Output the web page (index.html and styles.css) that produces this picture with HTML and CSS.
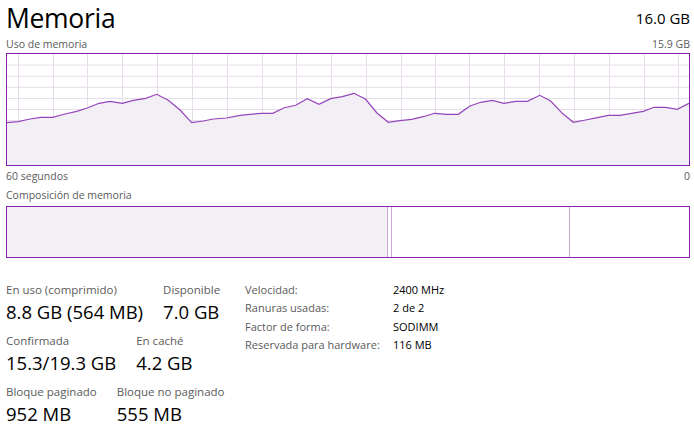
FILE: index.html
```html
<!DOCTYPE html>
<html lang="es">
<head>
<meta charset="utf-8">
<title>Memoria</title>
<link rel="stylesheet" href="styles.css">
</head>
<body>
<div class="page">
  <div class="header">
    <h1 class="title">Memoria</h1>
    <div class="total">16.0 GB</div>
  </div>
  <div class="caption-row">
    <span>Uso de memoria</span>
    <span>15.9 GB</span>
  </div>
  <div class="graph">
    <svg class="graph-svg" viewBox="0 0 682 111" preserveAspectRatio="none" xmlns="http://www.w3.org/2000/svg">
      <g class="grid">
        <line x1="0" y1="11.1" x2="682" y2="11.1"/>
        <line x1="0" y1="22.2" x2="682" y2="22.2"/>
        <line x1="0" y1="33.3" x2="682" y2="33.3"/>
        <line x1="0" y1="44.4" x2="682" y2="44.4"/>
        <line x1="0" y1="55.5" x2="682" y2="55.5"/>
        <line x1="0" y1="66.6" x2="682" y2="66.6"/>
        <line x1="0" y1="77.7" x2="682" y2="77.7"/>
        <line x1="0" y1="88.8" x2="682" y2="88.8"/>
        <line x1="0" y1="99.9" x2="682" y2="99.9"/>
        <line x1="11.5" y1="0" x2="11.5" y2="111"/>
        <line x1="46.5" y1="0" x2="46.5" y2="111"/>
        <line x1="80.5" y1="0" x2="80.5" y2="111"/>
        <line x1="115.5" y1="0" x2="115.5" y2="111"/>
        <line x1="150.5" y1="0" x2="150.5" y2="111"/>
        <line x1="185.5" y1="0" x2="185.5" y2="111"/>
        <line x1="220.5" y1="0" x2="220.5" y2="111"/>
        <line x1="255.5" y1="0" x2="255.5" y2="111"/>
        <line x1="289.5" y1="0" x2="289.5" y2="111"/>
        <line x1="324.5" y1="0" x2="324.5" y2="111"/>
        <line x1="359.5" y1="0" x2="359.5" y2="111"/>
        <line x1="394.5" y1="0" x2="394.5" y2="111"/>
        <line x1="428.5" y1="0" x2="428.5" y2="111"/>
        <line x1="462.5" y1="0" x2="462.5" y2="111"/>
        <line x1="497.5" y1="0" x2="497.5" y2="111"/>
        <line x1="532.5" y1="0" x2="532.5" y2="111"/>
        <line x1="567.5" y1="0" x2="567.5" y2="111"/>
        <line x1="602.5" y1="0" x2="602.5" y2="111"/>
        <line x1="637.5" y1="0" x2="637.5" y2="111"/>
        <line x1="671.5" y1="0" x2="671.5" y2="111"/>
      </g>
      <polygon class="area" points="0,68.7 11.3,67.7 23,65 34,63.3 45.7,63.3 58,60 69.7,57.3 80.3,54 92,49.3 103,47.3 115.3,49.3 126.3,46.3 138.7,44.3 149.7,40.3 161.3,46.3 173,56 184.7,68.7 196.3,67 206.3,65 219.7,64 233,61.3 243,60.3 254.7,59.3 265.7,59.3 277.3,53.7 288.7,51.3 300.3,44.7 312,50.3 323.7,44.7 335.3,42.7 347,39.3 358.7,45.3 369.7,58.7 381.3,68.3 393,66.7 404.7,65.3 416.3,62.7 427.7,59.3 439.7,60.3 451.3,60.3 463,52 473.7,48.3 485.3,46.3 497,49.3 508.7,47.3 520.3,47.3 532.7,41.3 543.7,47 555.3,59.3 566.3,68.3 578.7,66 590.3,63.7 601.3,61.3 613,61.3 624.7,59.3 636.3,57.3 647,53.3 658.7,53.3 670.3,55.3 682,49.3 682,111 0,111"/>
      <polyline class="line" points="0,68.7 11.3,67.7 23,65 34,63.3 45.7,63.3 58,60 69.7,57.3 80.3,54 92,49.3 103,47.3 115.3,49.3 126.3,46.3 138.7,44.3 149.7,40.3 161.3,46.3 173,56 184.7,68.7 196.3,67 206.3,65 219.7,64 233,61.3 243,60.3 254.7,59.3 265.7,59.3 277.3,53.7 288.7,51.3 300.3,44.7 312,50.3 323.7,44.7 335.3,42.7 347,39.3 358.7,45.3 369.7,58.7 381.3,68.3 393,66.7 404.7,65.3 416.3,62.7 427.7,59.3 439.7,60.3 451.3,60.3 463,52 473.7,48.3 485.3,46.3 497,49.3 508.7,47.3 520.3,47.3 532.7,41.3 543.7,47 555.3,59.3 566.3,68.3 578.7,66 590.3,63.7 601.3,61.3 613,61.3 624.7,59.3 636.3,57.3 647,53.3 658.7,53.3 670.3,55.3 682,49.3"/>
    </svg>
  </div>
  <div class="caption-row axis">
    <span>60 segundos</span>
    <span>0</span>
  </div>
  <div class="caption-row comp-label">
    <span>Composición de memoria</span>
  </div>
  <div class="composition">
    <div class="seg seg-inuse"></div>
    <div class="seg seg-modified"></div>
    <div class="seg seg-standby"></div>
    <div class="seg seg-free"></div>
  </div>
  <div class="details">
    <div class="stats">
      <div class="stat-row">
        <div class="stat"><div class="stat-label">En uso (comprimido)</div><div class="stat-value">8.8 GB (564 MB)</div></div>
        <div class="stat"><div class="stat-label">Disponible</div><div class="stat-value">7.0 GB</div></div>
      </div>
      <div class="stat-row">
        <div class="stat"><div class="stat-label">Confirmada</div><div class="stat-value">15.3/19.3 GB</div></div>
        <div class="stat"><div class="stat-label">En caché</div><div class="stat-value">4.2 GB</div></div>
      </div>
      <div class="stat-row">
        <div class="stat"><div class="stat-label">Bloque paginado</div><div class="stat-value">952 MB</div></div>
        <div class="stat"><div class="stat-label">Bloque no paginado</div><div class="stat-value">555 MB</div></div>
      </div>
    </div>
    <div class="props">
      <div class="prop-label">Velocidad:</div><div class="prop-value">2400 MHz</div>
      <div class="prop-label">Ranuras usadas:</div><div class="prop-value">2 de 2</div>
      <div class="prop-label">Factor de forma:</div><div class="prop-value">SODIMM</div>
      <div class="prop-label">Reservada para hardware:</div><div class="prop-value">116 MB</div>
    </div>
  </div>
</div>
</body>
</html>
```

FILE: styles.css
```css
* { box-sizing: border-box; }
html, body { margin: 0; padding: 0; background: #ffffff; }
body {
  font-family: "Open Sans", "Noto Sans", "DejaVu Sans", sans-serif;
  color: #000;
  width: 694px;
  height: 428px;
  overflow: hidden;
}
.page {
  padding: 0 4px 0 6px;
}
.header {
  display: flex;
  justify-content: space-between;
  align-items: flex-end;
  height: 34px;
}
.title {
  margin: 0;
  font-weight: 400;
  font-size: 26.5px;
  line-height: 32px;
  letter-spacing: -0.3px;
}
.total {
  font-size: 15px;
  line-height: 20px;
  margin-bottom: 6px;
}
.caption-row {
  display: flex;
  justify-content: space-between;
  font-size: 10.5px;
  line-height: 14px;
  color: #5b5b5b;
  height: 19px;
  padding-top: 3px;
}
.graph {
  height: 113px;
  border: 1px solid #8b1fae;
  background: #ffffff;
}
.graph-svg {
  display: block;
  width: 100%;
  height: 100%;
}
.grid line {
  stroke: #e6dcea;
  stroke-width: 1;
}
.area {
  fill: #f3f0f5;
  stroke: none;
}
.line {
  fill: none;
  stroke: #9544bb;
  stroke-width: 1.2;
}
.axis {
  height: 20px;
  padding-top: 3px;
}
.comp-label {
  height: 20px;
  padding-top: 2px;
}
.composition {
  display: flex;
  height: 52px;
  border: 1px solid #8b1fae;
}
.seg {
  height: 100%;
  border-right: 1px solid #c9a7d9;
}
.seg-inuse { width: 381px; background: #f3f0f5; }
.seg-modified { width: 4px; }
.seg-standby { width: 178px; }
.seg-free { flex: 1; border-right: none; }
.details {
  display: flex;
  margin-top: 22px;
}
.stats {
  width: 239px;
  display: flex;
  flex-direction: column;
  gap: 6px;
}
.stat-row {
  display: flex;
  gap: 20px;
}
.stat-label {
  font-size: 11.5px;
  line-height: 19px;
  color: #5b5b5b;
}
.stat-value {
  font-size: 18.5px;
  line-height: 26px;
  color: #000;
}
.props {
  display: grid;
  grid-template-columns: 148px auto;
  grid-auto-rows: 18.3px;
  font-size: 11px;
  line-height: 18px;
  padding-top: 1px;
}
.prop-label { color: #5b5b5b; }
.prop-value { color: #000; }
```
